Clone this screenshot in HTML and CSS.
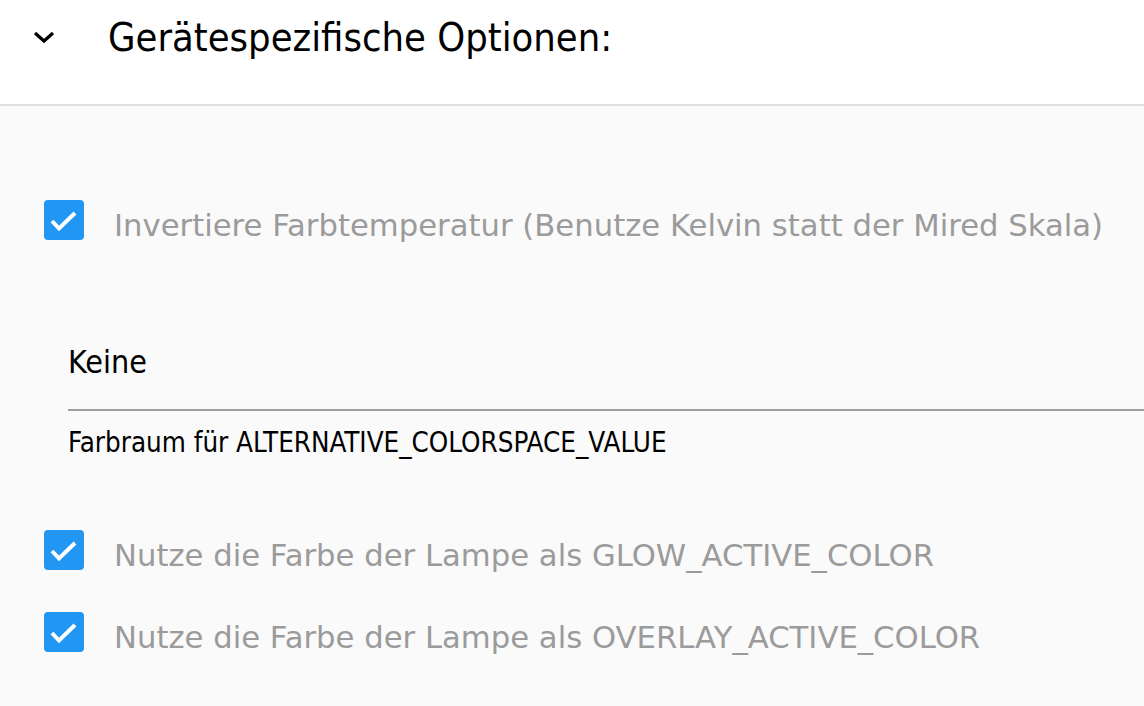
FILE: index.html
```html
<!DOCTYPE html>
<html lang="de">
<head>
<meta charset="utf-8">
<link rel="stylesheet" href="styles.css">
</head>
<body>
<div class="panel">
  <div class="panel-header">
    <span class="chevron">
      <svg width="24" height="14" viewBox="0 0 24 14"><path d="M3 3 L12 11 L21 3" fill="none" stroke="#000" stroke-width="3.2"/></svg>
    </span>
    <span class="panel-title">Gerätespezifische Optionen:</span>
  </div>
  <div class="panel-body">
    <label class="check-row">
      <span class="box"><svg width="40" height="40" viewBox="0 0 40 40"><path d="M8 21 L15 28.5 L31 13" fill="none" stroke="#fff" stroke-width="4"/></svg></span>
      <span class="check-label">Invertiere Farbtemperatur (Benutze Kelvin statt der Mired Skala)</span>
    </label>
    <div class="select-field">
      <div class="select-value">Keine</div>
      <div class="select-helper">Farbraum für ALTERNATIVE_COLORSPACE_VALUE</div>
    </div>
    <label class="check-row">
      <span class="box"><svg width="40" height="40" viewBox="0 0 40 40"><path d="M8 21 L15 28.5 L31 13" fill="none" stroke="#fff" stroke-width="4"/></svg></span>
      <span class="check-label">Nutze die Farbe der Lampe als GLOW_ACTIVE_COLOR</span>
    </label>
    <label class="check-row">
      <span class="box"><svg width="40" height="40" viewBox="0 0 40 40"><path d="M8 21 L15 28.5 L31 13" fill="none" stroke="#fff" stroke-width="4"/></svg></span>
      <span class="check-label">Nutze die Farbe der Lampe als OVERLAY_ACTIVE_COLOR</span>
    </label>
  </div>
</div>
</body>
</html>
```
FILE: styles.css
```css
html, body {
  margin: 0;
  padding: 0;
  background: #fafafa;
  font-family: "DejaVu Sans", "Liberation Sans", sans-serif;
}
.panel {
  width: 1144px;
  height: 706px;
  overflow: hidden;
}
.panel-header {
  height: 106px;
  background: #fff;
  border-bottom: 2px solid #e0e0e0;
  display: flex;
  align-items: center;
  box-sizing: border-box;
  padding-bottom: 30px;
}
.chevron {
  width: 24px;
  margin-left: 32px;
  display: flex;
}
.panel-title {
  margin-left: 52px;
  font-family: "DejaVu Sans Condensed", "DejaVu Sans", sans-serif;
  font-stretch: condensed;
  font-size: 39.5px;
  color: #000;
}
.panel-body {
  display: flex;
  flex-direction: column;
  padding: 94px 0 0 44px;
}
.check-row {
  display: flex;
  align-items: center;
  height: 40px;
  margin-bottom: 42px;
}
.box {
  width: 40px;
  height: 40px;
  border-radius: 4px;
  background: #2196f3;
  display: flex;
  flex: none;
}
.check-label {
  margin-left: 30px;
  padding-top: 10px;
  font-size: 30.7px;
  color: #9b9b9b;
  white-space: nowrap;
}
.select-field {
  margin: 48px 0 72px 24px;
}
.select-value {
  font-family: "DejaVu Sans Condensed", "DejaVu Sans", sans-serif;
  font-stretch: condensed;
  font-size: 32px;
  line-height: 38px;
  color: #000;
  padding-top: 13px;
  height: 81px;
  box-sizing: border-box;
  border-bottom: 2px solid #9e9e9e;
}
.select-helper {
  font-family: "DejaVu Sans Condensed", "DejaVu Sans", sans-serif;
  font-stretch: condensed;
  font-size: 27.5px;
  line-height: 31px;
  color: #000;
  margin-top: 16px;
}
```
